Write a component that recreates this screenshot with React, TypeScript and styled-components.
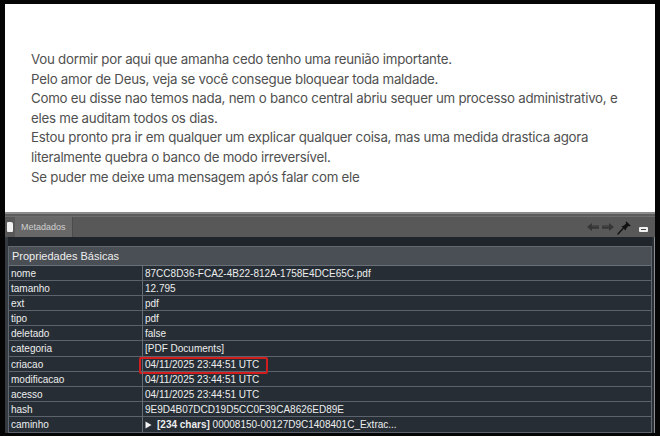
import React from "react";
import styled, { createGlobalStyle } from "styled-components";

const GlobalStyle = createGlobalStyle`
  html, body { margin: 0; padding: 0; background: #000; }
  #root { width: 660px; height: 436px; }
`;

const Frame = styled.div`
  width: 660px;
  height: 436px;
  box-sizing: border-box;
  background: #050505;
  padding: 4px 5px 4px 5px;
  display: flex;
  flex-direction: column;
`;

const MessagePanel = styled.div`
  background: #ffffff;
  height: 208px;
  flex: none;
  box-sizing: border-box;
  padding: 46px 0 0 26px;
  font-family: Inter, "Liberation Sans", sans-serif;
  font-size: 13.3px;
  letter-spacing: -0.25px;
  line-height: 19.6px;
  color: #505050;
  white-space: nowrap;
`;

const Para = styled.p`
  margin: 0;
`;

const Splitter = styled.div`
  height: 5px;
  flex: none;
  box-sizing: border-box;
  background: #5d5d5d;
  border-top: 2px solid #8c8c8c;
  border-bottom: 1px solid #6e6e6e;
`;

const TabBar = styled.div`
  height: 20px;
  flex: none;
  display: flex;
  align-items: center;
  background: #585858;
  padding-left: 2px;
  padding-right: 7px;
`;

const DocIcon = styled.div`
  width: 6px;
  height: 10px;
  background: #f2f2f2;
  border-radius: 1px 2px 1px 1px;
  margin-right: 2px;
`;

const Tab = styled.div`
  height: 20px;
  width: 58px;
  box-sizing: border-box;
  background: #686868;
  display: flex;
  align-items: center;
  padding-left: 6px;
  font-family: "Liberation Sans", Arial, sans-serif;
  font-size: 9px;
  color: #cfcfcf;
  border-right: 1px solid #4c4c4c;
`;

const Spacer = styled.div`
  flex: 1;
`;

const ToolIcons = styled.div`
  display: flex;
  align-items: center;
  gap: 3px;
`;

const MinBox = styled.div`
  width: 9px;
  height: 5px;
  background: #f0f0f0;
  border-radius: 1px;
  margin-left: 4px;
  margin-top: 5px;
  display: flex;
  align-items: center;
  justify-content: center;
  &::after {
    content: "";
    width: 5px;
    height: 1px;
    background: #444;
  }
`;

const Body = styled.div`
  flex: 1;
  background: #1f252b;
  padding: 9px 3px 0 3px;
  display: flex;
  flex-direction: column;
  box-shadow: inset 3px 0 0 #343a40, inset -1px 0 0 #8a8e92, inset -3px 0 0 #2a3036;
`;

const Table = styled.div`
  display: grid;
  grid-template-columns: 134px 1fr;
  background: #262d35;
  border: 1px solid #626870;
  border-bottom: 0;
  font-family: "Liberation Sans", Arial, sans-serif;
  font-size: 10px;
  color: #ededed;
`;

const HeaderCell = styled.div`
  grid-column: 1 / -1;
  height: 17.5px;
  background: #4a4e55;
  border-bottom: 1px solid #6a7078;
  font-size: 11px;
  line-height: 18px;
  padding-left: 3px;
  color: #eeeeee;
`;

const Cell = styled.div<{ $label?: boolean }>`
  position: relative;
  height: 14.2px;
  line-height: 15px;
  border-bottom: 1px solid #5c636c;
  padding-left: 2px;
  border-right: ${(p) => (p.$label ? "1px solid #666c74" : "0")};
  white-space: nowrap;
`;

const Highlight = styled.div`
  position: absolute;
  left: -4px;
  top: 0px;
  width: 125px;
  height: 13px;
  border: 2px solid #d11d1d;
  border-radius: 2px;
  pointer-events: none;
`;

const Bold = styled.b`
  font-weight: bold;
`;

const Arrow = ({ dir }: { dir: "left" | "right" }) => (
  <svg width="12" height="8" viewBox="0 0 12 8" style={{ transform: dir === "right" ? "scaleX(-1)" : undefined }}>
    <polygon points="0,4 5,0 5,2.3 12,2.3 12,5.7 5,5.7 5,8" fill="#363636" />
    <polygon points="5,2.3 12,2.3 12,3.6 5,3.6" fill="#4a4a4a" />
  </svg>
);

const Pin = () => (
  <svg width="15" height="15" viewBox="0 0 15 15">
    <path d="M1 14 L6 8.5" stroke="#111" strokeWidth="1.4" strokeLinecap="round" />
    <path d="M4.5 6.5 L8.5 10.5 L9.5 8 L12.5 5 L10 2.5 L7 5.5 Z" fill="#111" />
    <path d="M9.2 1.2 L13.8 5.8 L12.7 6.5 L8.5 2.3 Z" fill="#111" />
  </svg>
);

const Triangle = () => (
  <svg width="7" height="8" viewBox="0 0 7 8" style={{ marginRight: 5, verticalAlign: "-1px" }}>
    <polygon points="0.5,0.5 6.5,4 0.5,7.5" fill="#f2f2f2" />
  </svg>
);

type Row = { k: string; v: React.ReactNode; mark?: boolean };

const rows: Row[] = [
  { k: "nome", v: "87CC8D36-FCA2-4B22-812A-1758E4DCE65C.pdf" },
  { k: "tamanho", v: "12.795" },
  { k: "ext", v: "pdf" },
  { k: "tipo", v: "pdf" },
  { k: "deletado", v: "false" },
  { k: "categoria", v: "[PDF Documents]" },
  { k: "criacao", v: "04/11/2025 23:44:51 UTC", mark: true },
  { k: "modificacao", v: "04/11/2025 23:44:51 UTC" },
  { k: "acesso", v: "04/11/2025 23:44:51 UTC" },
  { k: "hash", v: "9E9D4B07DCD19D5CC0F39CA8626ED89E" },
  {
    k: "caminho",
    v: (
      <>
        <Triangle />
        <Bold>[234 chars]</Bold> 00008150-00127D9C1408401C_Extrac...
      </>
    ),
  },
];

export default function App() {
  return (
    <>
      <GlobalStyle />
      <Frame>
        <MessagePanel>
          <Para>Vou dormir por aqui que amanha cedo tenho uma reunião importante.</Para>
          <Para>Pelo amor de Deus, veja se você consegue bloquear toda maldade.</Para>
          <Para>
            Como eu disse nao temos nada, nem o banco central abriu sequer um processo administrativo, e
            <br />
            eles me auditam todos os dias.
          </Para>
          <Para>
            Estou pronto pra ir em qualquer um explicar qualquer coisa, mas uma medida drastica agora
            <br />
            literalmente quebra o banco de modo irreversível.
          </Para>
          <Para>Se puder me deixe uma mensagem após falar com ele</Para>
        </MessagePanel>
        <Splitter />
        <TabBar>
          <DocIcon />
          <Tab>Metadados</Tab>
          <Spacer />
          <ToolIcons>
            <Arrow dir="left" />
            <Arrow dir="right" />
            <Pin />
            <MinBox />
          </ToolIcons>
        </TabBar>
        <Body>
          <Table>
            <HeaderCell>Propriedades Básicas</HeaderCell>
            {rows.map((r) => (
              <React.Fragment key={r.k}>
                <Cell $label>{r.k}</Cell>
                <Cell>
                  {r.v}
                  {r.mark && <Highlight />}
                </Cell>
              </React.Fragment>
            ))}
          </Table>
        </Body>
      </Frame>
    </>
  );
}
